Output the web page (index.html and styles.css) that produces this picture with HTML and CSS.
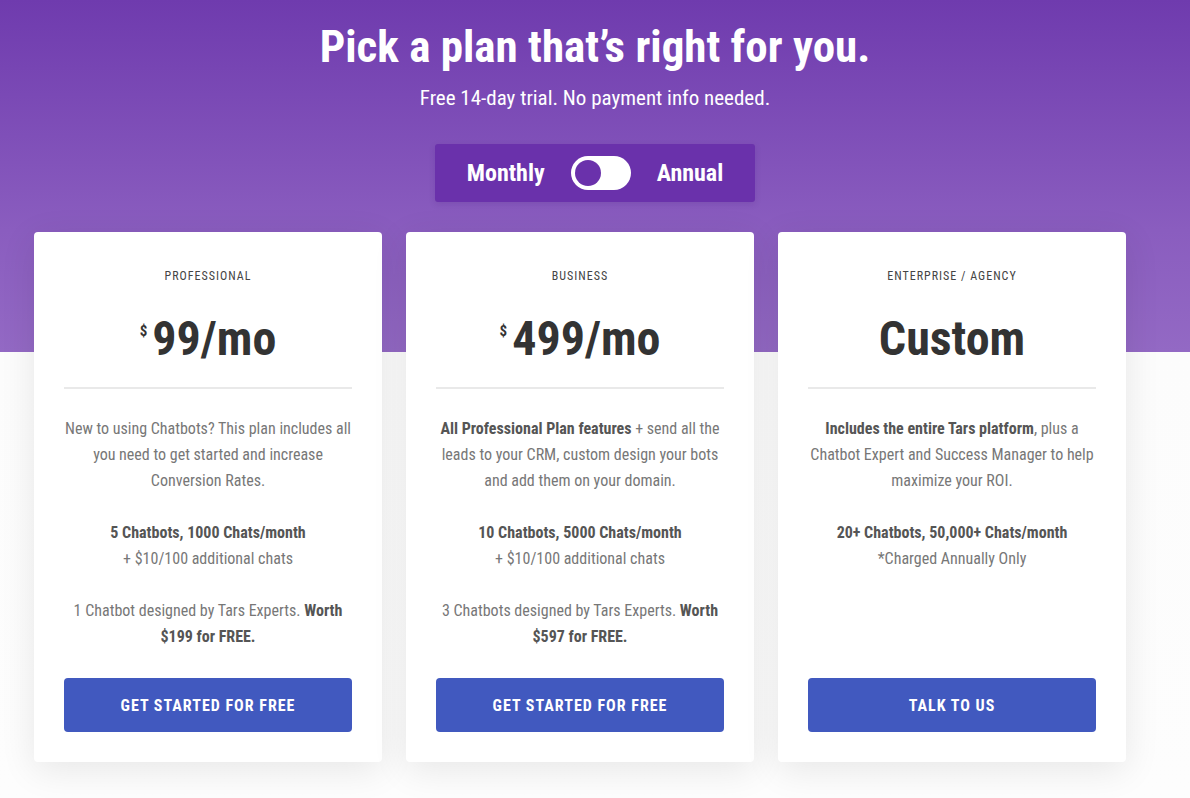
FILE: index.html
```html
<!DOCTYPE html>
<html>
<head>
<meta charset="utf-8">
<link rel="stylesheet" href="styles.css">
</head>
<body>
<div class="page">
  <header class="hero">
    <h1 class="title">Pick a plan that’s right for you.</h1>
    <p class="subtitle">Free 14-day trial. No payment info needed.</p>
    <div class="toggle">
      <span class="toggle-label">Monthly</span>
      <span class="switch"><span class="knob"></span></span>
      <span class="toggle-label">Annual</span>
    </div>
  </header>
  <section class="cards">
    <div class="card">
      <div class="tier">PROFESSIONAL</div>
      <div class="price"><span class="dollar">$</span>99/mo</div>
      <hr class="divider">
      <div class="desc">
        <p>New to using Chatbots? This plan includes all you need to get started and increase Conversion Rates.</p>
        <p><b>5 Chatbots, 1000 Chats/month</b><br>+ $10/100 additional chats</p>
        <p>1 Chatbot designed by Tars Experts. <b>Worth $199 for FREE.</b></p>
      </div>
      <a class="btn">GET STARTED FOR FREE</a>
    </div>
    <div class="card">
      <div class="tier">BUSINESS</div>
      <div class="price"><span class="dollar">$</span>499/mo</div>
      <hr class="divider">
      <div class="desc">
        <p><b>All Professional Plan features</b> + send all the leads to your CRM, custom design your bots and add them on your domain.</p>
        <p><b>10 Chatbots, 5000 Chats/month</b><br>+ $10/100 additional chats</p>
        <p>3 Chatbots designed by Tars Experts. <b>Worth $597 for FREE.</b></p>
      </div>
      <a class="btn">GET STARTED FOR FREE</a>
    </div>
    <div class="card">
      <div class="tier">ENTERPRISE / AGENCY</div>
      <div class="price">Custom</div>
      <hr class="divider">
      <div class="desc">
        <p><b>Includes the entire Tars platform</b>, plus a Chatbot Expert and Success Manager to help maximize your ROI.</p>
        <p><b>20+ Chatbots, 50,000+ Chats/month</b><br>*Charged Annually Only</p>
      </div>
      <a class="btn">TALK TO US</a>
    </div>
  </section>
</div>
</body>
</html>
```
FILE: styles.css
```css
* { box-sizing: border-box; }
html, body { margin: 0; padding: 0; }
body {
  font-family: "Roboto Condensed", "Roboto", "Liberation Sans", sans-serif;
  background: linear-gradient(180deg, #6f3bae 0px, #8a5dbf 230px, #9369c4 352px, #fcfcfc 352px, #fdfdfd 798px);
  min-height: 798px;
  width: 1190px;
  overflow: hidden;
}
.page { display: flex; flex-direction: column; align-items: center; }
.hero { display: flex; flex-direction: column; align-items: center; padding-top: 20px; color: #fff; }
.title { margin: 0; font-size: 45px; font-weight: 700; line-height: 54px; letter-spacing: 0; }
.subtitle { margin: 11px 0 0; font-size: 21px; line-height: 26px; font-weight: 400; }
.toggle {
  margin-top: 33px;
  width: 320px; height: 58px;
  background: #6a31ab;
  border-radius: 3px;
  display: flex; align-items: center; justify-content: center; gap: 26px;
  box-shadow: 0 2px 6px rgba(60, 20, 110, 0.15);
}
.toggle-label { font-size: 24px; font-weight: 700; }
.switch {
  width: 60px; height: 34px; border-radius: 17px; background: #fff;
  display: flex; align-items: center; padding-left: 4px;
}
.knob { width: 26px; height: 26px; border-radius: 50%; background: #6a31ab; }
.cards { display: flex; gap: 24px; margin-top: 30px; margin-right: 30px; }
.card {
  width: 348px; height: 530px;
  background: #fff; border-radius: 4px;
  box-shadow: 0 8px 36px rgba(0,0,0,0.09);
  padding: 37px 30px 30px;
  display: flex; flex-direction: column; align-items: stretch;
  text-align: center;
}
.tier { font-size: 12px; letter-spacing: 1px; color: #444; line-height: 14px; }
.price { margin-top: 28px; font-size: 48px; font-weight: 700; color: #333; line-height: 56px; }
.dollar { font-size: 15px; vertical-align: top; position: relative; top: -8px; margin-right: 5px; }
.divider { margin: 20px 0 0; border: 0; height: 2px; background: #e9e9e9; }
.desc { margin-top: 27px; font-size: 16px; line-height: 26px; color: #777; flex: 1; }
.desc p { margin: 0 0 26px; }
.desc b { color: #555; font-weight: 700; }
.btn {
  display: flex; align-items: center; justify-content: center;
  height: 54px; background: #4159bf; color: #fff; border-radius: 4px;
  font-size: 16px; font-weight: 700; letter-spacing: 1px;
}
```
